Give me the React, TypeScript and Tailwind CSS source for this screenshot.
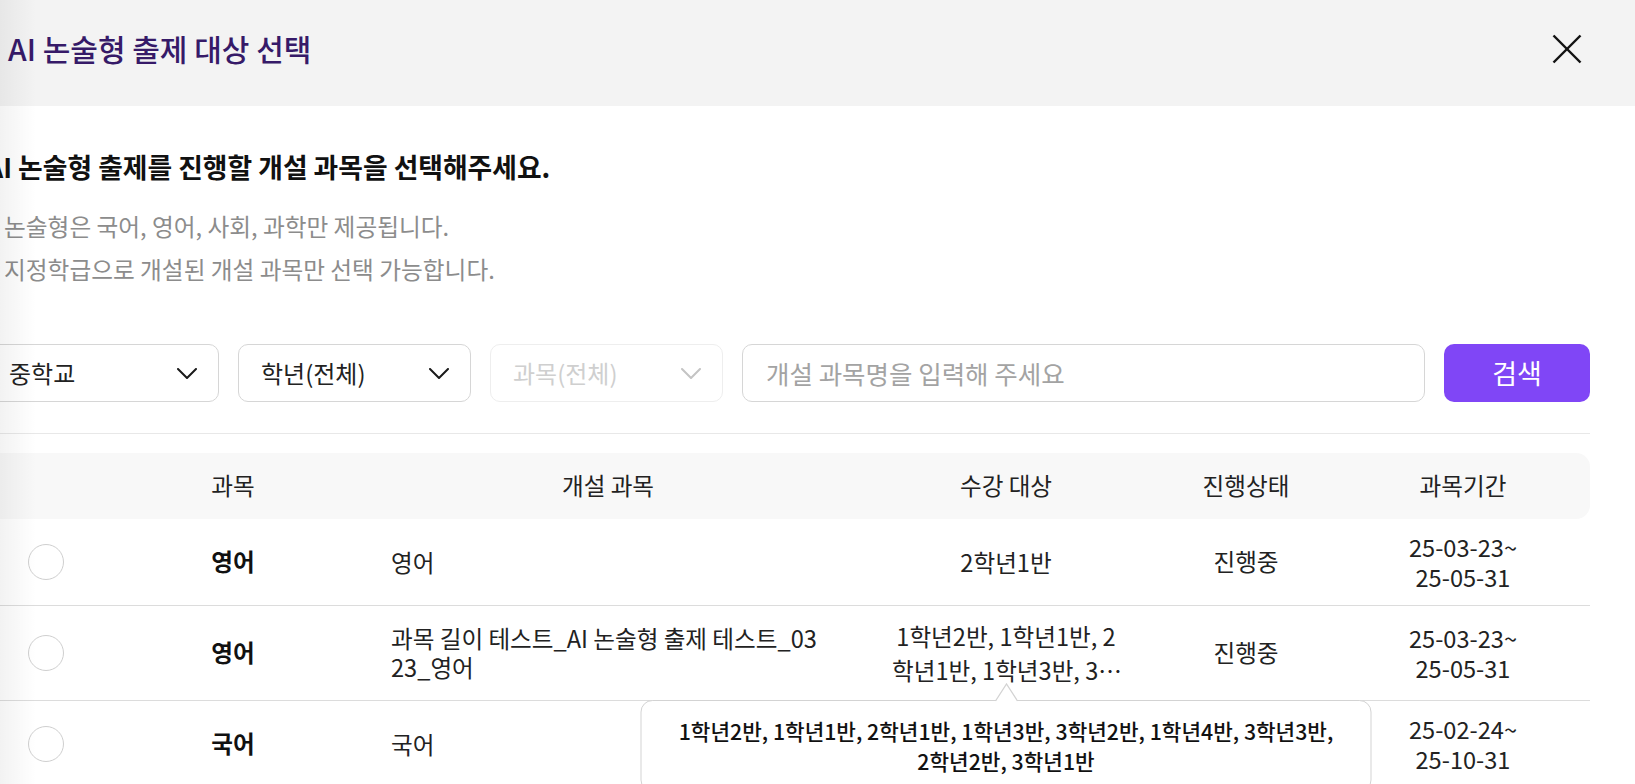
import React from "react";

type Course = {
  subject: string;
  course: string;
  target: string;
  status: string;
  start: string;
  end: string;
  showTip?: boolean;
};

const courses: Course[] = [
  { subject: "영어", course: "영어", target: "2학년1반", status: "진행중", start: "25-03-23~", end: "25-05-31" },
  {
    subject: "영어",
    course: "과목 길이 테스트_AI 논술형 출제 테스트_0323_영어",
    target: "1학년2반, 1학년1반, 2학년1반, 1학년3반, 3학년2반, 1학년4반, 3학년3반, 2학년2반, 3학년1반",
    status: "진행중",
    start: "25-03-23~",
    end: "25-05-31",
    showTip: true,
  },
  { subject: "국어", course: "국어", target: "1학년1반", status: "진행중", start: "25-02-24~", end: "25-10-31" },
];

const cols = "grid grid-cols-[120px_254px_496px_300px_180px_254px]";

const Chevron = ({ color }: { color: string }) => (
  <svg width="20" height="11" viewBox="0 0 20 11" fill="none">
    <polyline points="1,1 10,10 19,1" stroke={color} strokeWidth="2" strokeLinecap="round" strokeLinejoin="round" />
  </svg>
);

const Select = ({ label, disabled }: { label: string; disabled?: boolean }) => (
  <div
    className={
      disabled
        ? "flex w-[233px] items-center justify-between rounded-[10px] border border-[#eeeeee] pl-[22px] pr-[21px] text-[24px] text-[#cfcfcf]"
        : "flex w-[233px] items-center justify-between rounded-[10px] border border-[#d6d6d6] pl-[22px] pr-[21px] text-[24px] text-[#222222]"
    }
  >
    <span>{label}</span>
    <Chevron color={disabled ? "#c4c4c4" : "#1a1a1a"} />
  </div>
);

const Tooltip = ({ text }: { text: string }) => (
  <div className="absolute left-1/2 top-[calc(100%-4px)] z-10 w-[731px] -translate-x-1/2 pt-[17px]">
    <svg className="absolute left-1/2 top-0 -translate-x-1/2" width="24" height="19" viewBox="0 0 24 19" fill="none">
      <polygon points="1,18.5 12,1 23,18.5" fill="#ffffff" />
      <polyline points="1,18 12,1 23,18" stroke="#d3d3d3" strokeWidth="1.3" />
    </svg>
    <div className="rounded-[12px] border border-[#d3d3d3] bg-white px-[36px] py-[15px] text-center text-[21.3px] font-medium leading-[30px] text-[#111111]">
      {text}
    </div>
  </div>
);

export default function App() {
  return (
    <div className="relative h-[784px] w-full overflow-hidden bg-white font-['Noto_Sans_CJK_KR','Noto_Sans',sans-serif] text-[#222222]">
      <header className="flex h-[106px] items-center justify-between bg-[#f3f3f3] pb-[9px] pl-[8px] pr-[53px]">
        <h2 className="text-[30px] font-medium text-[#361a68]">AI 논술형 출제 대상 선택</h2>
        <button className="flex h-[30px] w-[30px] items-center justify-center">
          <svg width="30" height="30" viewBox="0 0 30 30" fill="none">
            <line x1="1.5" y1="1.5" x2="28.5" y2="28.5" stroke="#111" strokeWidth="2.4" />
            <line x1="28.5" y1="1.5" x2="1.5" y2="28.5" stroke="#111" strokeWidth="2.4" />
          </svg>
        </button>
      </header>

      <div className="-ml-[14px] w-[1604px] pt-[45px]">
        <p className="text-[26.8px] font-semibold leading-[32px] text-[#111111]">
          AI 논술형 출제를 진행할 개설 과목을 선택해주세요.
        </p>
        <ul className="mt-[28px] flex flex-col gap-[13px] text-[23.7px] leading-[30px] text-[#8c8c8c]">
          <li className="flex">
            <span className="w-[18px]">·</span>논술형은 국어, 영어, 사회, 과학만 제공됩니다.
          </li>
          <li className="flex">
            <span className="w-[18px]">·</span>지정학급으로 개설된 개설 과목만 선택 가능합니다.
          </li>
        </ul>

        <div className="mt-[60px] flex h-[58px] gap-[19px]">
          <Select label="중학교" />
          <Select label="학년(전체)" />
          <Select label="과목(전체)" disabled />
          <input
            className="min-w-0 flex-1 rounded-[10px] border border-[#d6d6d6] pl-[23px] text-[25.5px] outline-none placeholder:text-[#a3a3a3]"
            placeholder="개설 과목명을 입력해 주세요"
          />
          <button className="w-[146px] rounded-[10px] bg-[#8046f6] text-[27px] text-white">검색</button>
        </div>

        <div className="mt-[31px] h-px bg-[#e8e8e8]" />

        <div className="mt-[19px]">
          <div className={`${cols} h-[66px] items-center rounded-[14px] bg-[#f8f8f8] text-center text-[23.6px]`}>
            <span />
            <span>과목</span>
            <span>개설 과목</span>
            <span>수강 대상</span>
            <span>진행상태</span>
            <span>과목기간</span>
          </div>

          {courses.map((c, i) => (
            <div key={i} className={`${cols} min-h-[86px] items-center border-b border-[#dcdcdc] py-[13px] text-[23.6px]`}>
              <div className="flex justify-center">
                <span className="h-[36px] w-[36px] rounded-full border border-[#cfcfcf] bg-white" />
              </div>
              <div className="text-center font-bold text-[#111111]">{c.subject}</div>
              <div className="break-all pl-[31px] pr-[30px] leading-[29px]">{c.course}</div>
              <div className="relative px-[32px]">
                <p className="line-clamp-2 break-all text-center leading-[34px]">{c.target}</p>
                {c.showTip && <Tooltip text={c.target} />}
              </div>
              <div className="text-center">{c.status}</div>
              <div className="text-center leading-[30px]">
                <div>{c.start}</div>
                <div>{c.end}</div>
              </div>
            </div>
          ))}
        </div>
      </div>

      <div className="pointer-events-none absolute inset-y-0 left-0 w-[36px] bg-linear-to-r from-black/[0.05] to-transparent" />
    </div>
  );
}
